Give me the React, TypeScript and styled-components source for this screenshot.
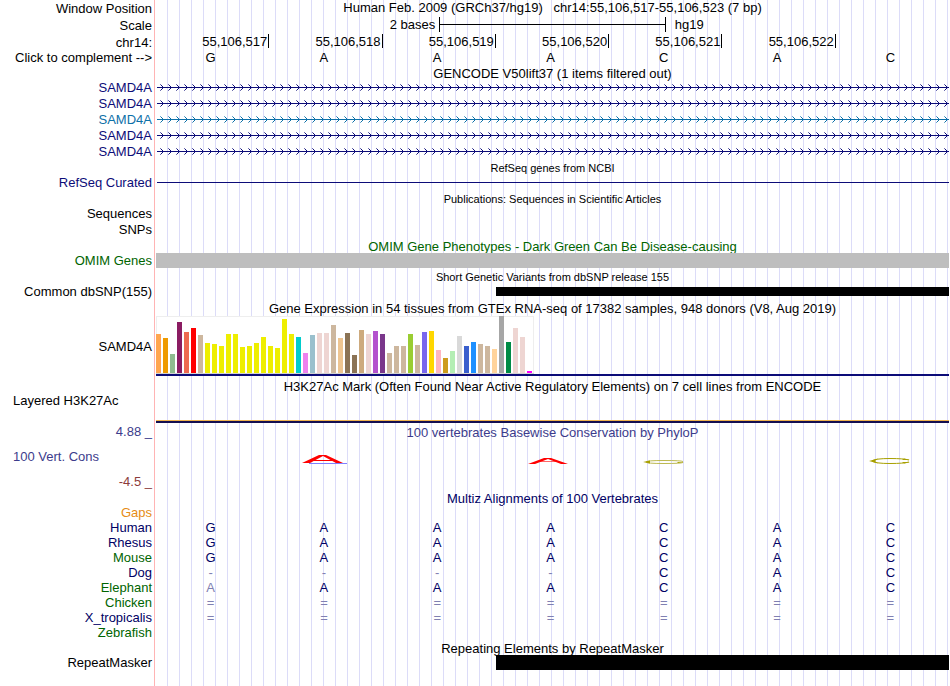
import React, { useState } from "react";
import styled, { createGlobalStyle } from "styled-components";

const GlobalStyle = createGlobalStyle`
  body {
    margin: 0;
    background: #ffffff;
    color: #000000;
    font-family: "Liberation Sans", Arial, Helvetica, sans-serif;
    font-size: 13px;
    line-height: 14px;
  }
`;

const NAVY = "#0c0c78";
const TEAL = "#0c70a8";
const GREEN = "#006400";
const INK = "#000064";
const SLATE = "#3c3c8c";

const Browser = styled.main`
  display: flex;
  flex-direction: column;
  min-height: 100vh;
  padding-right: 1px;
  box-sizing: border-box;
  overflow: hidden;
`;

const Row = styled.section<{ $h?: number }>`
  display: grid;
  grid-template-columns: 155px minmax(0, 1fr);
  min-height: ${(p) => p.$h ?? 15}px;
  ${(p) => (p.$h === 0 ? "flex: 1;" : "")}
`;

const Side = styled.div<{ $left?: boolean; $top?: boolean; $drop?: boolean }>`
  display: flex;
  flex-direction: column;
  align-items: ${(p) => (p.$left ? "flex-start" : "flex-end")};
  justify-content: ${(p) => (p.$top ? "flex-start" : "center")};
  padding: ${(p) => (p.$drop ? 2 : 0)}px 2px 0 13px;
  border-right: 1px solid #ffb4b4;
  white-space: nowrap;
`;

const Label = styled.span<{ $color?: string }>`
  color: ${(p) => p.$color ?? "#000000"};
`;

const ComplementButton = styled.button`
  padding: 0;
  border: 0;
  background: none;
  color: inherit;
  font: inherit;
  cursor: pointer;
`;

const Lane = styled.div`
  display: grid;
  margin-left: 1px;
  align-items: center;
  background: repeating-linear-gradient(
    to right,
    transparent 0 11px,
    #dcdcf8 11px 12px
  );
`;

const Title = styled.h2<{ $color?: string; $small?: boolean; $low?: boolean; $middle?: boolean }>`
  align-self: ${(p) => (p.$middle ? "center" : "end")};
  margin: 0;
  font-size: ${(p) => (p.$small ? 11 : 13)}px;
  font-weight: 400;
  line-height: ${(p) => (p.$low ? 12 : 14)}px;
  text-align: center;
  white-space: pre;
  color: ${(p) => p.$color ?? "#000000"};
`;

const ScaleLane = styled(Lane)`
  grid-template-columns: 5fr 4fr 5fr;
`;

const ScaleText = styled.span<{ $end?: boolean }>`
  text-align: ${(p) => (p.$end ? "right" : "left")};
  padding: ${(p) => (p.$end ? "0 4px 0 0" : "0 0 0 9px")};
`;

const ScaleBar = styled.div`
  display: flex;
  align-items: center;
  height: 15px;
  margin-bottom: 1px;
  border: solid #000000;
  border-width: 0 1px;

  &::before {
    content: "";
    flex: 1;
    height: 1px;
    background: #000000;
  }
`;

const Bases = styled(Lane)`
  grid-template-columns: repeat(7, minmax(0, 1fr));
`;

const Tick = styled.span`
  align-self: start;
  height: 14px;
  line-height: 16px;
  text-align: right;
  padding-right: 1px;
  border-right: 1px solid #000000;
`;

const Base = styled.span<{ $color?: string }>`
  padding-right: 4px;
  text-align: center;
  color: ${(p) => p.$color ?? "#000000"};
`;

const Block = styled.div<{ $h: number; $color: string; $from?: number }>`
  grid-column: ${(p) => p.$from ?? 1} / -1;
  height: ${(p) => p.$h}px;
  background: ${(p) => p.$color};
`;

const Thread = styled.div`
  height: 1px;
  margin-left: 1px;
  background: ${NAVY};
`;

const Strand = styled.svg`
  display: block;
  width: 100%;
  height: 16px;
`;

const Expression = styled.div`
  display: flex;
  flex-direction: column;
  align-self: stretch;
  border-bottom: 2px solid ${NAVY};
`;

const Chart = styled.svg`
  display: block;
  width: 378px;
  height: 58px;
`;

const Signal = styled.div`
  align-self: end;
  height: 2px;
  border-top: 1px solid #f0b450;
  background: #140f50;
`;

const WiggleSide = styled(Side)`
  justify-content: space-between;
  padding-top: 10px;
  padding-bottom: 1px;
`;

const LowerLimit = styled(Label)`
  align-self: flex-end;
`;

const Logo = styled.svg`
  display: block;
  align-self: start;
  justify-self: center;
  width: 46px;
  height: 10px;
  margin: 14px 4px 0 0;
`;

const EXPRESSION: [number, string][] = [
  [39, "#ffa54f"], [35, "#ee9a00"], [19, "#8fbc8f"], [51, "#8b1c62"],
  [41, "#ee6a50"], [45, "#ff0000"], [38, "#cdb79e"], [30, "#eeee00"],
  [29, "#eeee00"], [27, "#eeee00"], [39, "#eeee00"], [39, "#eeee00"],
  [26, "#eeee00"], [27, "#eeee00"], [30, "#eeee00"], [36, "#eeee00"],
  [27, "#eeee00"], [25, "#eeee00"], [54, "#eeee00"], [39, "#eeee00"],
  [36, "#00cdcd"], [20, "#ee82ee"], [38, "#9ac0cd"], [40, "#eed5d2"],
  [40, "#eed5d2"], [48, "#cdb79e"], [35, "#eec591"], [40, "#8b7355"],
  [18, "#8b7355"], [43, "#cdaa7d"], [39, "#eed5d2"], [42, "#b452cd"],
  [39, "#7a378b"], [20, "#cdb79e"], [27, "#cdb79e"], [27, "#cdb79e"],
  [39, "#9acd32"], [28, "#cdb79e"], [41, "#7a67ee"], [42, "#ffd700"],
  [23, "#ffb6c1"], [15, "#cd9b1d"], [22, "#b4eeb4"], [37, "#d9d9d9"],
  [27, "#3a5fcd"], [31, "#1e90ff"], [29, "#cdb79e"], [27, "#cdb79e"],
  [24, "#ffd39b"], [57, "#a6a6a6"], [31, "#008b45"], [45, "#eed5d2"],
  [36, "#eed5d2"], [2, "#ff00ff"],
];

const SPECIES: [string, string, string][] = [
  ["Human", INK, "GAAACAC"],
  ["Rhesus", INK, "GAAACAC"],
  ["Mouse", GREEN, "GAAACAC"],
  ["Dog", INK, "----CAC"],
  ["Elephant", GREEN, "aAAACAC"],
  ["Chicken", GREEN, "======="],
  ["X_tropicalis", INK, "======="],
  ["Zebrafish", GREEN, ""],
];

const PAIRS: Record<string, string> = { A: "T", C: "G", G: "C", T: "A" };

function TitleRow(props: {
  h?: number;
  color?: string;
  small?: boolean;
  low?: boolean;
  middle?: boolean;
  side?: React.ReactNode;
  children: React.ReactNode;
}) {
  return (
    <Row $h={props.h}>
      <Side $drop={props.middle}>{props.side}</Side>
      <Lane>
        <Title
          $color={props.color}
          $small={props.small}
          $low={props.low}
          $middle={props.middle}
        >
          {props.children}
        </Title>
      </Lane>
    </Row>
  );
}

function Transcript({ color, id }: { color: string; id: string }) {
  return (
    <Row $h={16}>
      <Side><Label $color={color}>SAMD4A</Label></Side>
      <Lane>
        <Strand aria-hidden="true">
          <defs>
            <pattern id={id} width="8" height="16" x="1" patternUnits="userSpaceOnUse">
              <path d="M3 5h1v1h-1z M4 6h1v1h-1z M4 10h1v1h-1z M3 11h1v1h-1z" fill={color} opacity="0.6" />
              <path d="M5 7h1v1h-1z M6 8h1v1h-1z M5 9h1v1h-1z M4 6h1v1h-1z M4 10h1v1h-1z" fill={color} />
            </pattern>
          </defs>
          <g transform="translate(0 -1)">
            <rect x="1" y="8" width="100%" height="1" fill={color} />
            <rect x="1" width="100%" height="16" fill={`url(#${id})`} />
          </g>
        </Strand>
      </Lane>
    </Row>
  );
}

function Peak({ tall }: { tall?: boolean }) {
  return (
    <Logo viewBox="0 0 46 10" aria-hidden="true">
      {tall ? (
        <>
          <path d="M8 9.5 H46" stroke="#8080ff" strokeWidth="1" />
          <path d="M1 9 L18 1 H25 L42 9 H35 L22 2 L9 9 Z" fill="#ff0000" />
          <path d="M13 6.5 H31" stroke="#ff0000" strokeWidth="1" />
        </>
      ) : (
        <>
          <path d="M1 10 L17 4 H24 L41 10 H34 L21 5 L8 10 Z" fill="#ff0000" />
          <path d="M13 7.5 H29" stroke="#ff0000" strokeWidth="0.6" />
        </>
      )}
    </Logo>
  );
}

function Ring({ tall }: { tall?: boolean }) {
  return (
    <Logo viewBox="0 0 46 10" aria-hidden="true">
      {tall ? (
        <>
          <path d="M42 6 Q37 4.5 23 4.5 Q8 4.5 5 7 Q8 9.5 23 9.5 Q37 9.5 42 8" fill="none" stroke="#a8a000" strokeWidth="1" />
          <path d="M2 7 L11 4.5 L8 7 L11 9.5 Z M35 8 H43 L37 9.5 Z M35 6 H43 L37 4.5 Z" fill="#a8a000" />
        </>
      ) : (
        <>
          <path d="M42 7.5 Q40 6.5 23 6.5 Q5 6.5 5 8 Q5 9.5 23 9.5 Q40 9.5 42 8.5" fill="none" stroke="#b4b03c" strokeWidth="0.9" />
          <path d="M2 8 L9 6.5 V9.5 Z M36 8 H43 L37 9 Z" fill="#a8a000" />
        </>
      )}
    </Logo>
  );
}

export default function App() {
  const [complement, setComplement] = useState(false);
  const bases = "GAAACAC".split("").map((b) => (complement ? PAIRS[b] : b));

  return (
    <>
      <GlobalStyle />
      <Browser>
        <TitleRow h={16} middle side={<Label>Window Position</Label>}>
          {"Human Feb. 2009 (GRCh37/hg19)   chr14:55,106,517-55,106,523 (7 bp)"}
        </TitleRow>
        <Row $h={18}>
          <Side $drop><Label>Scale</Label></Side>
          <ScaleLane>
            <ScaleText $end>2 bases</ScaleText>
            <ScaleBar />
            <ScaleText>hg19</ScaleText>
          </ScaleLane>
        </Row>
        <Row $h={16}>
          <Side $drop><Label>chr14:</Label></Side>
          <Bases>
            {[517, 518, 519, 520, 521, 522].map((n) => (
              <Tick key={n}>55,106,{n}</Tick>
            ))}
          </Bases>
        </Row>
        <Row>
          <Side>
            <ComplementButton type="button" onClick={() => setComplement(!complement)}>
              {"Click to complement -->"}
            </ComplementButton>
          </Side>
          <Bases>{bases.map((b, i) => <Base key={i}>{b}</Base>)}</Bases>
        </Row>

        <TitleRow low>GENCODE V50lift37 (1 items filtered out)</TitleRow>
        {[NAVY, NAVY, TEAL, NAVY, NAVY].map((color, i) => (
          <Transcript key={i} color={color} id={`strand-${i}`} />
        ))}

        <TitleRow small>RefSeq genes from NCBI</TitleRow>
        <Row>
          <Side><Label $color={NAVY}>RefSeq Curated</Label></Side>
          <Lane><Thread /></Lane>
        </Row>

        <TitleRow h={16} small>Publications: Sequences in Scientific Articles</TitleRow>
        <Row $h={16}><Side><Label>Sequences</Label></Side><Lane /></Row>
        <Row $h={16}><Side><Label>SNPs</Label></Side><Lane /></Row>

        <TitleRow low color={GREEN}>OMIM Gene Phenotypes - Dark Green Can Be Disease-causing</TitleRow>
        <Row>
          <Side><Label $color={GREEN}>OMIM Genes</Label></Side>
          <Lane><Block $h={15} $color="#bebebe" /></Lane>
        </Row>

        <TitleRow h={16} small>Short Genetic Variants from dbSNP release 155</TitleRow>
        <Row>
          <Side><Label>Common dbSNP(155)</Label></Side>
          <Bases><Block $h={9} $color="#000000" $from={4} /></Bases>
        </Row>

        <TitleRow h={17}>
          Gene Expression in 54 tissues from GTEx RNA-seq of 17382 samples, 948 donors (V8, Aug 2019)
        </TitleRow>
        <Row $h={60}>
          <Side $drop><Label>SAMD4A</Label></Side>
          <Lane>
            <Expression>
              <Chart viewBox="0 0 378 58" role="img" aria-label="Expression by tissue">
                <rect width="378" height="58" fill="#eeeeee" />
                <rect x="1" y="1" width="376" height="56" fill="#ffffff" />
                <rect y="57" width="378" height="1" fill="#d2d2d2" />
                {EXPRESSION.map(([h, fill], i) => (
                  <rect key={i} x={i * 7} y={57 - h} width="5" height={h} fill={fill} />
                ))}
              </Chart>
            </Expression>
          </Lane>
        </Row>

        <TitleRow h={18}>
          H3K27Ac Mark (Often Found Near Active Regulatory Elements) on 7 cell lines from ENCODE
        </TitleRow>
        <Row $h={29}>
          <Side $left $top><Label>Layered H3K27Ac</Label></Side>
          <Lane><Signal /></Lane>
        </Row>

        <TitleRow h={17} color={SLATE} side={<Label $color={SLATE}>4.88 _</Label>}>
          100 vertebrates Basewise Conservation by PhyloP
        </TitleRow>
        <Row $h={50}>
          <WiggleSide $left>
            <Label $color={SLATE}>100 Vert. Cons</Label>
            <LowerLimit $color="#8c3c3c">-4.5 _</LowerLimit>
          </WiggleSide>
          <Bases>
            <span />
            <Peak tall />
            <span />
            <Peak />
            <Ring />
            <span />
            <Ring tall />
          </Bases>
        </Row>

        <TitleRow low color={INK}>Multiz Alignments of 100 Vertebrates</TitleRow>
        <Row><Side><Label $color="#e68c14">Gaps</Label></Side><Lane /></Row>
        {SPECIES.map(([name, color, sequence]) => (
          <Row key={name}>
            <Side><Label $color={color}>{name}</Label></Side>
            <Bases>
              {sequence.split("").map((b, i) => (
                <Base key={i} $color={/[A-Z]/.test(b) ? INK : "#8080b2"}>
                  {b.toUpperCase()}
                </Base>
              ))}
            </Bases>
          </Row>
        ))}

        <TitleRow low>Repeating Elements by RepeatMasker</TitleRow>
        <Row>
          <Side><Label>RepeatMasker</Label></Side>
          <Bases><Block $h={15} $color="#000000" $from={4} /></Bases>
        </Row>
        <Row $h={0}><Side /><Lane /></Row>
      </Browser>
    </>
  );
}
